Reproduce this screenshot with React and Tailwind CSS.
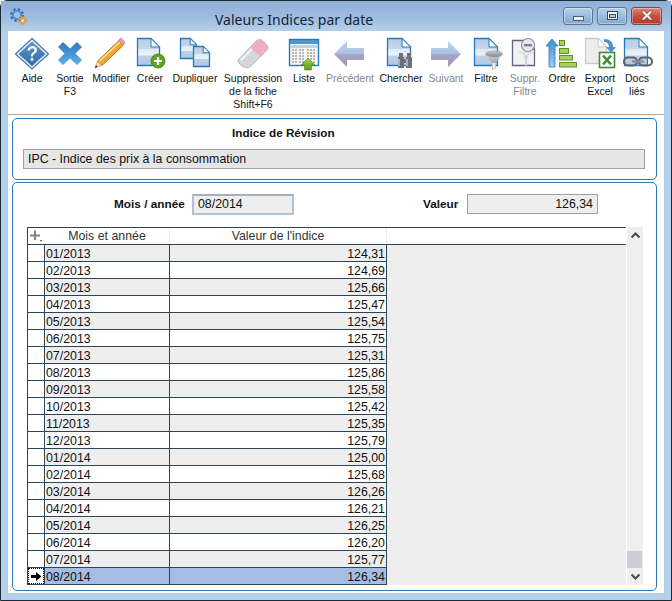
const sans = { fontFamily: '"Liberation Sans", Arial, sans-serif' };

function Defs() {
  return (
    <svg width="0" height="0" className="absolute">
      <defs>
        <linearGradient id="docFill" x1="0" y1="0" x2="0" y2="1">
          <stop offset="0" stopColor="#b7cce6" />
          <stop offset="0.38" stopColor="#c3d6ec" />
          <stop offset="0.4" stopColor="#dfeaf5" />
          <stop offset="0.62" stopColor="#eef3f8" />
          <stop offset="0.64" stopColor="#bcd0e8" />
          <stop offset="1" stopColor="#b3c8e4" />
        </linearGradient>
        <linearGradient id="diaFill" x1="0" y1="0" x2="0" y2="1">
          <stop offset="0" stopColor="#5f94c8" />
          <stop offset="1" stopColor="#2f6ca6" />
        </linearGradient>
        <linearGradient id="xFill" x1="0" y1="0" x2="0" y2="1">
          <stop offset="0" stopColor="#2f7cc0" />
          <stop offset="1" stopColor="#62ace2" />
        </linearGradient>
        <linearGradient id="arrowFill" x1="0" y1="0" x2="0" y2="1">
          <stop offset="0" stopColor="#b9d2ec" />
          <stop offset="0.5" stopColor="#a9c2e0" />
          <stop offset="0.52" stopColor="#a8a5c6" />
          <stop offset="1" stopColor="#9b96b8" />
        </linearGradient>
        <linearGradient id="steel" x1="0" y1="0" x2="0" y2="1">
          <stop offset="0" stopColor="#c9ced2" />
          <stop offset="1" stopColor="#7d8388" />
        </linearGradient>
        <linearGradient id="penBody" x1="0" y1="0" x2="1" y2="1">
          <stop offset="0" stopColor="#fbc04a" />
          <stop offset="1" stopColor="#ee8a14" />
        </linearGradient>
        <linearGradient id="greenUp" x1="0" y1="0" x2="0" y2="1">
          <stop offset="0" stopColor="#a4d23c" />
          <stop offset="1" stopColor="#5e9d16" />
        </linearGradient>
        <linearGradient id="blueUp" x1="0" y1="0" x2="0" y2="1">
          <stop offset="0" stopColor="#3d8fd2" />
          <stop offset="1" stopColor="#9ccbef" />
        </linearGradient>
      </defs>
    </svg>
  );
}

function Doc({ x = 0, y = 0, w = 23, h = 28, stroke = "#2a78b8", fill = "url(#docFill)" }) {
  const f = Math.min(9, w * 0.4);
  return (
    <g>
      <path
        d={`M${x + 0.5} ${y + 0.5}H${x + w - f}L${x + w - 0.5} ${y + f}V${y + h - 0.5}H${x + 0.5}Z`}
        fill={fill}
        stroke={stroke}
        strokeWidth="1.3"
      />
      <path d={`M${x + w - f} ${y + 0.5}V${y + f}H${x + w - 0.5}Z`} fill="#fff" stroke={stroke} strokeWidth="1" />
    </g>
  );
}

function Funnel({ x, y, stroke = "#8b9094" }) {
  return (
    <g transform={`translate(${x} ${y})`}>
      <ellipse cx="9" cy="3" rx="8.5" ry="3" fill="url(#steel)" stroke={stroke} strokeWidth="0.6" />
      <path d="M1 4L7 12V19L11 17V12L17 4C13 7 5 7 1 4Z" fill="url(#steel)" />
      <path d="M7.5 12V18.5L10.5 17V12Z" fill="#f0f2f4" />
    </g>
  );
}

const icons = {
  aide: (
    <>
      <path d="M18 1.5L34.5 17L18 32L1.5 17Z" fill="#e8eef5" stroke="#3f75a8" strokeWidth="1.2" />
      <path d="M18 4.5L31.5 17L18 29L4.5 17Z" fill="url(#diaFill)" />
      <path d="M13.6 13.6C13.8 10.5 16 9 18.3 9C21 9 23 10.8 23 13C23 15 21.8 15.8 20.4 16.8C19.3 17.6 19 18.1 19 19.6H16.9C16.9 17.6 17.4 16.6 18.8 15.6C20 14.7 20.5 14.2 20.5 13.1C20.5 12 19.6 11.2 18.3 11.2C17 11.2 16.2 12 16 13.6Z" fill="#fff" />
      <rect x="16.7" y="21" width="2.6" height="2.8" fill="#fff" />
    </>
  ),
  sortie: (
    <path d="M11 5L18 11.5L25 5L30 10L23.5 16.5L30 23L25 28L18 21.5L11 28L6 23L12.5 16.5L6 10Z" fill="url(#xFill)" />
  ),
  modifier: (
    <>
      <path d="M2 31L5 23.5L26 3.5L30.5 8L10 27.5Z" fill="url(#penBody)" stroke="#9a6216" strokeWidth="0.8" />
      <path d="M6.5 24L27 5" stroke="#ffe9a8" strokeWidth="1.2" />
      <path d="M2 31L4 25L8 28.5Z" fill="#f6dfb8" />
      <path d="M2 31L3 28L4.6 29.6Z" fill="#333" />
      <path d="M25.5 3L28 1L32 5L30.5 8Z" fill="#ef9ab4" stroke="#a87a88" strokeWidth="0.6" />
    </>
  ),
  creer: (
    <>
      <Doc x={5} y={1} w={23} h={28} />
      <circle cx="26" cy="24" r="7" fill="#62a31e" stroke="#447a12" strokeWidth="0.8" />
      <path d="M22 24H30M26 20V28" stroke="#fff" strokeWidth="2.2" />
    </>
  ),
  dupliquer: (
    <>
      <Doc x={3} y={1} w={17} h={21} />
      <Doc x={16} y={9} w={17} h={21} />
    </>
  ),
  suppression: (
    <>
      <path d="M4 22L21 4C23 2 26 2 28 4L32 8C33.5 10 33 12 32 13L16 29C14 31 12 31 10 30H8L4 26C3 25 3 23 4 22Z" fill="#d5d8da" stroke="#a7abae" strokeWidth="0.8" />
      <path d="M15 11L21 4C23 2 26 2 28 4L32 8C33.5 10 33 12 32 13L26 20Z" fill="#eeaec8" />
      <path d="M6 23L17 12" stroke="#f3f4f5" strokeWidth="2" />
    </>
  ),
  liste: (
    <>
      <rect x="3.5" y="2.5" width="29" height="26" fill="#f7f8f5" stroke="#2a78b8" strokeWidth="1.4" />
      <rect x="4" y="3" width="28" height="4" fill="#4d95cf" />
      <rect x="4" y="8" width="28" height="3" fill="#bcd4ea" />
      {[13, 16, 19, 22, 25].map((y) => (
        <g key={y}>
          <path d={`M6 ${y}H11M13 ${y}H19M21 ${y}H30`} stroke="#6f7578" strokeWidth="1" strokeDasharray="2 1" />
        </g>
      ))}
      <path d="M22 21L29 28H25.5V33H18.5V28H15Z" fill="url(#greenUp)" stroke="#4f8a12" strokeWidth="0.6" />
    </>
  ),
  prev: <path d="M2 17L15 4V11H32V23H15V30Z" fill="url(#arrowFill)" />,
  chercher: (
    <>
      <Doc x={4} y={1} w={24} h={28} />
      <g fill="#6c7276">
        <rect x="16" y="16" width="4" height="4" />
        <rect x="24" y="16" width="4" height="4" />
        <rect x="15" y="20" width="6" height="11" />
        <rect x="23" y="20" width="6" height="11" />
        <rect x="21" y="22" width="2" height="4" />
      </g>
      <path d="M16 22V29M24 22V29" stroke="#d9dde0" strokeWidth="1.2" />
    </>
  ),
  suivant: <path d="M33 17L20 4V11H3V23H20V30Z" fill="url(#arrowFill)" />,
  filtre: (
    <>
      <Doc x={6} y={1} w={24} h={28} />
      <Funnel x={17} y={14} />
    </>
  ),
  suppr: (
    <>
      <Doc x={5} y={3} w={23} h={26} stroke="#67647f" fill="#f1f2f4" />
      <rect x="12" y="14" width="14" height="3" fill="#e2e5e8" />
      <path d="M15 15C18 19 20 19 23 15L20 22V29L18 28V22Z" fill="#cfd6dc" />
      <circle cx="21" cy="8" r="6.5" fill="#e6e8ec" stroke="#8e90a6" strokeWidth="1.2" />
      <rect x="17" y="7" width="8" height="2.4" fill="#7d8096" />
    </>
  ),
  ordre: (
    <>
      <path d="M8 2L14 9H11V30H5V9H2Z" fill="url(#blueUp)" stroke="#2a78b8" strokeWidth="0.8" />
      <rect x="15.5" y="3.5" width="5" height="5" fill="#a9cf5e" stroke="#5e9322" />
      <rect x="15.5" y="11.5" width="9" height="5" fill="#a9cf5e" stroke="#5e9322" />
      <rect x="15.5" y="18.5" width="13" height="4.5" fill="#a9cf5e" stroke="#5e9322" />
      <rect x="15.5" y="25.5" width="17" height="4.5" fill="#a9cf5e" stroke="#5e9322" />
    </>
  ),
  export: (
    <>
      <Doc x={3} y={1} w={22} h={26} stroke="#c9cbcd" fill="#eceded" />
      <path d="M22 2C28 2 31 5 31 10H34L29 16L24 10H27C27 7 25 5 22 5Z" fill="#4d95cf" />
      <rect x="17.5" y="15.5" width="15" height="15" fill="#fff" stroke="#3f8a34" strokeWidth="1.6" />
      <path d="M21 18.5L29 27.5M29 18.5L21 27.5" stroke="#3f8a34" strokeWidth="2.6" />
    </>
  ),
  docs: (
    <>
      <Doc x={5} y={1} w={24} h={28} />
      <g fill="none" stroke="#5f6468" strokeWidth="2.2">
        <rect x="5" y="20.5" width="13" height="8" rx="4" />
        <rect x="20" y="20.5" width="13" height="8" rx="4" />
      </g>
      <path d="M13 24.5H25" stroke="#8a8f92" strokeWidth="2.4" />
    </>
  ),
};

const tools = [
  ["aide", ["Aide"], 40],
  ["sortie", ["Sortie", "F3"], 36],
  ["modifier", ["Modifier"], 46],
  ["creer", ["Créer"], 32],
  ["dupliquer", ["Dupliquer"], 58],
  ["suppression", ["Suppression", "de la fiche", "Shift+F6"], 58],
  ["liste", ["Liste"], 44],
  ["prev", ["Précédent"], 48, true],
  ["chercher", ["Chercher"], 54],
  ["suivant", ["Suivant"], 36, true],
  ["filtre", ["Filtre"], 44],
  ["suppr", ["Suppr.", "Filtre"], 34, true],
  ["ordre", ["Ordre"], 40],
  ["export", ["Export", "Excel"], 36],
  ["docs", ["Docs", "liés"], 38],
];

const rows = [
  ["01/2013", "124,31"],
  ["02/2013", "124,69"],
  ["03/2013", "125,66"],
  ["04/2013", "125,47"],
  ["05/2013", "125,54"],
  ["06/2013", "125,75"],
  ["07/2013", "125,31"],
  ["08/2013", "125,86"],
  ["09/2013", "125,58"],
  ["10/2013", "125,42"],
  ["11/2013", "125,35"],
  ["12/2013", "125,79"],
  ["01/2014", "125,00"],
  ["02/2014", "125,68"],
  ["03/2014", "126,26"],
  ["04/2014", "126,21"],
  ["05/2014", "126,25"],
  ["06/2014", "126,20"],
  ["07/2014", "125,77"],
  ["08/2014", "126,34"],
];

function WinButton({ kind }) {
  const cls =
    kind === "close"
      ? "w-[31px] bg-gradient-to-b from-[#dc8a80] via-[#c8503f] to-[#b03a2c] border-[#7a4a48]"
      : "w-[30px] bg-gradient-to-b from-[#b9d0ea] via-[#9bbbdf] to-[#85a9d2] border-[#5f7590]";
  return (
    <div className={`h-[18px] rounded-[3px] border flex items-center justify-center shadow-[inset_0_0_0_1px_rgba(255,255,255,0.35)] ${cls}`}>
      {kind === "min" && <div className="w-[11px] h-[5px] mt-[5px] bg-[#eef2f6] border border-[#4c5c70]" />}
      {kind === "max" && (
        <div className="w-[11px] h-[9px] border border-[#3c4a5c] bg-[#eef2f6] flex items-center justify-center">
          <div className="w-[7px] h-[4px] border border-[#3c4a5c] bg-[#b9cce2]" />
        </div>
      )}
      {kind === "close" && (
        <svg width="14" height="11" viewBox="0 0 14 11">
          <path d="M1 1H4.5L7 3.7L9.5 1H13L9 5.5L13 10H9.5L7 7.3L4.5 10H1L5 5.5Z" fill="#f4f0ee" stroke="#6a3a34" strokeWidth="0.6" />
        </svg>
      )}
    </div>
  );
}

function Gear() {
  return (
    <svg width="17" height="17" viewBox="0 0 17 17" className="shrink-0">
      <circle cx="7" cy="7" r="5.6" fill="none" stroke="#2f6fb5" strokeWidth="2.6" strokeDasharray="2.4 2" />
      <circle cx="7" cy="7" r="3.9" fill="none" stroke="#4f8ccb" strokeWidth="2.4" />
      <circle cx="7" cy="7" r="2.6" fill="none" stroke="#a8cbeb" strokeWidth="1" />
      <circle cx="12.5" cy="12.5" r="3.2" fill="none" stroke="#ee9a1c" strokeWidth="2.6" strokeDasharray="1.8 0.8" />
      <circle cx="12.5" cy="12.5" r="1.3" fill="#fbe2ad" />
    </svg>
  );
}

function Chevron({ up }) {
  return (
    <svg width="9" height="7" viewBox="0 0 9 7">
      <path d={up ? "M0.5 5.5L4.5 1.5L8.5 5.5" : "M0.5 1.5L4.5 5.5L8.5 1.5"} fill="none" stroke="#4a4a55" strokeWidth="2" />
    </svg>
  );
}

export default function App() {
  return (
    <div className="w-[672px] h-[601px] bg-white overflow-hidden" style={sans}>
      <Defs />
      <div className="h-full flex flex-col rounded-t-[7px] border border-[#1c2b33] bg-[#b4cfe9]">
        <div className="h-[30px] flex items-center pl-[9px] pr-[9px] bg-gradient-to-b from-[#8eafd7] via-[#9dbadf] to-[#b4cfe9] shrink-0">
          <Gear />
          <div
            className="ml-[188px] text-[14px] leading-[20px] text-[#10233c] mt-[8px] whitespace-nowrap"
            style={{ fontFamily: '"Noto Sans", "Open Sans", sans-serif' }}
          >
            Valeurs Indices par date
          </div>
          <div className="ml-auto flex gap-[4px] -mt-[1px]">
            <WinButton kind="min" />
            <WinButton kind="max" />
            <WinButton kind="close" />
          </div>
        </div>

        <div className="ml-[7px] mr-[7px] mb-[7px] flex-1 min-h-0 bg-white flex flex-col">
          <div className="h-[84px] mb-[3px] pl-[4px] pt-[6px] flex shrink-0 border-b border-[#a8abad]">
            {tools.map(([k, label, w, disabled]) => (
              <div key={k} className="flex flex-col items-center shrink-0" style={{ width: w }}>
                <svg width="36" height="34" viewBox="0 0 36 34" className="shrink-0">
                  {icons[k]}
                </svg>
                <div
                  className={`mt-[1px] text-[10.5px] leading-[13px] text-center whitespace-nowrap ${
                    disabled ? "text-[#7f8690]" : "text-[#101418]"
                  }`}
                >
                  {label.map((l) => (
                    <div key={l}>{l}</div>
                  ))}
                </div>
              </div>
            ))}
          </div>

          <div className="ml-[4px] mr-[7px] h-[62px] rounded-[5px] border border-[#3079b5] shrink-0 flex flex-col">
            <div className="mt-[6px] ml-[219px] text-[11.7px] leading-[15px] font-bold text-[#111]">Indice de Révision</div>
            <div className="mt-[9px] ml-[10px] mr-[11px] h-[20px] bg-[#e6e6e6] border border-[#9aa2a6] px-[4px] text-[12.35px] leading-[18px] text-[#111]">
              IPC - Indice des prix à la consommation
            </div>
          </div>

          <div className="ml-[4px] mr-[7px] mt-[2px] mb-[2px] flex-1 min-h-0 rounded-[5px] border border-[#3079b5] flex flex-col">
            <div className="h-[44px] pt-[11px] flex items-start shrink-0">
              <div className="ml-[101px] w-[72px] text-[11.8px] leading-[20px] font-bold text-[#111] whitespace-nowrap">Mois / année</div>
              <div className="ml-[6px] w-[102px] h-[21px] bg-[#eeeeee] border-2 border-[#a9b0b4] border-l-[#b0c4d4] border-b-[#b0c4d4] border-r-[#b0c4d4] px-[4px] text-[12.35px] leading-[17px] text-[#111]">
                08/2014
              </div>
              <div className="ml-[129px] w-[36px] text-[11.8px] leading-[20px] font-bold text-[#111]">Valeur</div>
              <div className="ml-[8px] w-[131px] h-[20px] bg-[#eeeeee] border border-[#9aa2a6] px-[4px] text-right text-[12.35px] leading-[18px] text-[#111]">
                126,34
              </div>
            </div>

            <div className="ml-[14px] flex items-start">
              <div className="w-[599px] h-[358px] border-l border-t border-[#2b4658] flex flex-col text-[12.35px]">
                <div className="h-[17px] flex shrink-0 border-b border-[#2b4658] text-[#333] leading-[16px]">
                  <div className="w-[16px] shrink-0 flex items-center justify-center">
                    <svg width="16" height="14" viewBox="0 0 16 14">
                      <path d="M7 1.5V11M2 6.5H12" stroke="#7c8288" strokeWidth="2" />
                      <path d="M11.5 11H14.5L13 12.5Z" fill="#555" />
                    </svg>
                  </div>
                  <div className="w-[126px] shrink-0 pl-[1px] text-center border-r border-[#ececec]">Mois et année</div>
                  <div className="w-[217px] shrink-0 text-center border-r border-[#ececec]">Valeur de l'indice</div>
                  <div className="flex-1" />
                </div>
                <div className="flex flex-1 min-h-0 items-start">
                  <div className="w-[359px] shrink-0">
                    {rows.map(([d, v], i) => {
                      const sel = i === rows.length - 1;
                      const bg = sel ? "bg-[#a5bde0]" : i % 2 === 0 ? "bg-[#eeeeee]" : "bg-white";
                      return (
                        <div key={d + i} className="h-[17px] flex border-b border-[#2b4658] text-[#111] leading-[18px]">
                          <div
                            className={`w-[16px] shrink-0 bg-white flex items-center justify-center ${
                              sel ? "border border-dotted border-black" : ""
                            }`}
                          >
                            {sel && (
                              <svg width="11" height="9" viewBox="0 0 11 9">
                                <path d="M0 3H5V0L10.5 4.5L5 9V6H0Z" fill="#000" />
                              </svg>
                            )}
                          </div>
                          <div className={`w-[126px] shrink-0 pl-[1px] border-l border-r border-[#2b4658] overflow-hidden ${bg}`}>{d}</div>
                          <div className={`w-[217px] shrink-0 pr-[1px] text-right border-r border-[#2b4658] overflow-hidden ${bg}`}>{v}</div>
                        </div>
                      );
                    })}
                  </div>
                  <div className="flex-1 h-[340px] bg-[#eeeeee]" />
                </div>
              </div>
              <div className="ml-[1px] w-[16px] h-[358px] bg-[#efefef] flex flex-col items-center">
                <div className="h-[17px] flex items-center justify-center shrink-0">
                  <Chevron up />
                </div>
                <div className="flex-1" />
                <div className="w-full pr-[1px]">
                  <div className="h-[17px] bg-[#cdcdd7]" />
                </div>
                <div className="h-[17px] flex items-center justify-center shrink-0">
                  <Chevron />
                </div>
              </div>
            </div>
          </div>
        </div>
      </div>
    </div>
  );
}
